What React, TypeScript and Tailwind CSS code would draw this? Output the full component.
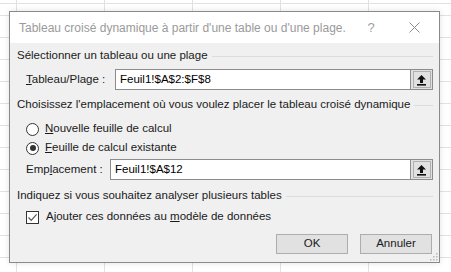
import React from 'react'

const font = "font-['Liberation_Sans',Arial,sans-serif]"

function UpArrow() {
  return (
    <svg width="11" height="12" viewBox="0 0 11 12">
      <path d="M5.5 1 L10 5.5 H7 V9 H4 V5.5 H1 Z" fill="#111" />
      <rect x="1" y="10" width="9" height="1.6" fill="#111" />
    </svg>
  )
}

function SectionHeader({ text }: { text: string }) {
  return (
    <div className="flex h-4 items-center gap-[4px] pr-[6px]">
      <span className="whitespace-nowrap">{text}</span>
      <div className="h-px flex-1 bg-[#dcdcdc]" />
    </div>
  )
}

function RefInput({ value }: { value: string }) {
  return (
    <div className="flex h-[21px] flex-1">
      <div className="flex flex-1 items-center border border-[#8c8c8c] bg-white pl-[4px] text-black">{value}</div>
      <div className="flex w-[22px] items-center justify-center border border-l-0 border-[#8c8c8c] bg-[#e1e1e1]">
        <div className="flex h-[17px] w-[18px] items-center justify-center border border-[#b0b0b0]">
          <UpArrow />
        </div>
      </div>
    </div>
  )
}

function Radio({ checked, label }: { checked?: boolean; label: React.ReactNode }) {
  return (
    <div className="flex h-4 items-center pl-[9px]">
      <div className="flex h-[13px] w-[13px] items-center justify-center rounded-full border border-[#333] bg-white">
        {checked && <div className="h-[6px] w-[6px] rounded-full bg-[#333]" />}
      </div>
      <span className="ml-[6px]">{label}</span>
    </div>
  )
}

export default function App() {
  const cols = 6
  const rowHeights = [4, 12, ...Array(12).fill(22)]

  return (
    <div className={`relative h-[272px] w-[451px] overflow-hidden bg-white ${font} text-[11.5px] text-[#1a1a1a]`}>
      {/* spreadsheet behind the dialog */}
      <div
        className="grid grid-cols-[17px_repeat(5,88px)]"
        style={{ gridTemplateRows: rowHeights.map((h) => `${h}px`).join(' ') }}
      >
        {rowHeights.flatMap((_, r) =>
          Array.from({ length: cols }).map((__, c) => (
            <div key={`${r}-${c}`} className="border-b border-r border-[#e2e2e2]" />
          ))
        )}
      </div>

      {/* dialog */}
      <div className="absolute left-[9px] top-[11px] flex h-[252px] w-[431px] flex-col border border-[#8a8a8a] bg-[#f0f0f0] shadow-[0_0_6px_rgba(0,0,0,0.12)]">
        <div className="flex h-[31px] items-center bg-white pl-[9px] text-[#9a9a9a]">
          <span className="w-[346px] whitespace-nowrap text-[12px]">Tableau croisé dynamique à partir d'une table ou d'une plage.</span>
          <span className="w-[12px] text-center text-[13px] text-[#a0a0a0]">?</span>
          <svg className="ml-[32px]" width="11" height="11" viewBox="0 0 11 11">
            <path d="M0.5 0.5 L10.5 10.5 M10.5 0.5 L0.5 10.5" stroke="#8a8a8a" strokeWidth="1" />
          </svg>
        </div>

        <div className="flex flex-1 flex-col pl-[7px] pt-[5px]">
          <SectionHeader text="Sélectionner un tableau ou une plage" />
          <div className="mt-[5px] flex items-center pr-[6px]">
            <span className="w-[98px] pl-[9px]">
              <span className="underline">T</span>ableau/Plage :
            </span>
            <RefInput value="Feuil1!$A$2:$F$8" />
          </div>

          <div className="mt-[7px]">
            <SectionHeader text="Choisissez l'emplacement où vous voulez placer le tableau croisé dynamique" />
          </div>
          <div className="mt-[8px]">
            <Radio label={<><span className="underline">N</span>ouvelle feuille de calcul</>} />
          </div>
          <div className="mt-[3px]">
            <Radio checked label={<><span className="underline">F</span>euille de calcul existante</>} />
          </div>
          <div className="mt-[3px] flex items-center pr-[6px]">
            <span className="w-[93px] pl-[9px]">
              Emp<span className="underline">l</span>acement :
            </span>
            <RefInput value="Feuil1!$A$12" />
          </div>

          <div className="mt-[8px]">
            <SectionHeader text="Indiquez si vous souhaitez analyser plusieurs tables" />
          </div>
          <div className="mt-[5px] flex h-4 items-center pl-[9px]">
            <div className="flex h-[13px] w-[13px] items-center justify-center border border-[#333] bg-white">
              <svg width="11" height="11" viewBox="0 0 11 11">
                <path d="M1.5 5.5 L4.2 8.3 L9.6 2.4" fill="none" stroke="#555" strokeWidth="1.2" />
              </svg>
            </div>
            <span className="ml-[7px]">
              Ajouter ces données au <span className="underline">m</span>odèle de données
            </span>
          </div>

          <div className="mt-[9px] flex justify-end gap-[12px] pr-[7px]">
            <button className="h-[20px] w-[72px] border border-[#adadad] bg-[#e1e1e1] text-[#1a1a1a]">OK</button>
            <button className="h-[20px] w-[72px] border border-[#adadad] bg-[#e1e1e1] text-[#1a1a1a]">Annuler</button>
          </div>
        </div>

        <svg className="absolute bottom-[1px] right-[1px]" width="10" height="10" viewBox="0 0 10 10">
          {[
            [8, 2], [8, 5], [5, 5], [8, 8], [5, 8], [2, 8],
          ].map(([x, y]) => (
            <rect key={`${x}-${y}`} x={x} y={y} width="1.5" height="1.5" fill="#b8b8b8" />
          ))}
        </svg>
      </div>
    </div>
  )
}
